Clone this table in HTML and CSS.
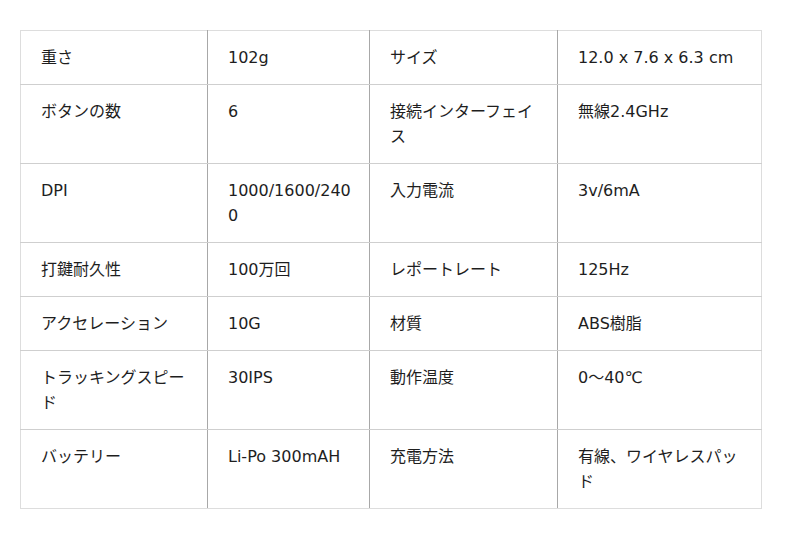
FILE: index.html
```html
<!DOCTYPE html>
<html lang="ja">
<head>
<meta charset="utf-8">
<link rel="stylesheet" href="styles.css">
</head>
<body>
<table class="spec">
<colgroup><col class="c1"><col class="c2"><col class="c3"><col class="c4"></colgroup>
<tbody>
<tr><td>重さ</td><td>102g</td><td>サイズ</td><td>12.0 x 7.6 x 6.3 cm</td></tr>
<tr><td>ボタンの数</td><td>6</td><td>接続インターフェイス</td><td>無線2.4GHz</td></tr>
<tr><td>DPI</td><td>1000/1600/2400</td><td>入力電流</td><td>3v/6mA</td></tr>
<tr><td>打鍵耐久性</td><td>100万回</td><td>レポートレート</td><td>125Hz</td></tr>
<tr><td>アクセレーション</td><td>10G</td><td>材質</td><td>ABS樹脂</td></tr>
<tr><td>トラッキングスピード</td><td>30IPS</td><td>動作温度</td><td>0～40℃</td></tr>
<tr><td>バッテリー</td><td>Li-Po 300mAH</td><td>充電方法</td><td>有線、ワイヤレスパッド</td></tr>
</tbody>
</table>
</body>
</html>
```

FILE: styles.css
```css
html, body {
  margin: 0;
  background: #fff;
}
body {
  padding: 30px 20px;
  font-family: "DejaVu Sans", "Noto Sans CJK JP", sans-serif;
  font-size: 16px;
  line-height: 25px;
  color: #1e1e1e;
}
.spec {
  border-collapse: collapse;
  table-layout: fixed;
  width: 741px;
  border: 1px solid #ddd;
}
.c1 { width: 187px; }
.c2 { width: 162px; }
.c3 { width: 188px; }
.c4 { width: 204px; }
.spec td {
  vertical-align: top;
  padding: 14px 16px 14px 20px;
  border-bottom: 1px solid #cfcfcf;
  border-right: 1px solid #a8a8a8;
  word-break: break-all;
}
.spec td:last-child {
  border-right: 1px solid #ddd;
}
.spec tr:last-child td {
  border-bottom: 1px solid #ddd;
}
.spec tr:first-child td {
  border-top: 1px solid #ddd;
}
.spec td:first-child {
  border-left: 1px solid #ddd;
}
```
